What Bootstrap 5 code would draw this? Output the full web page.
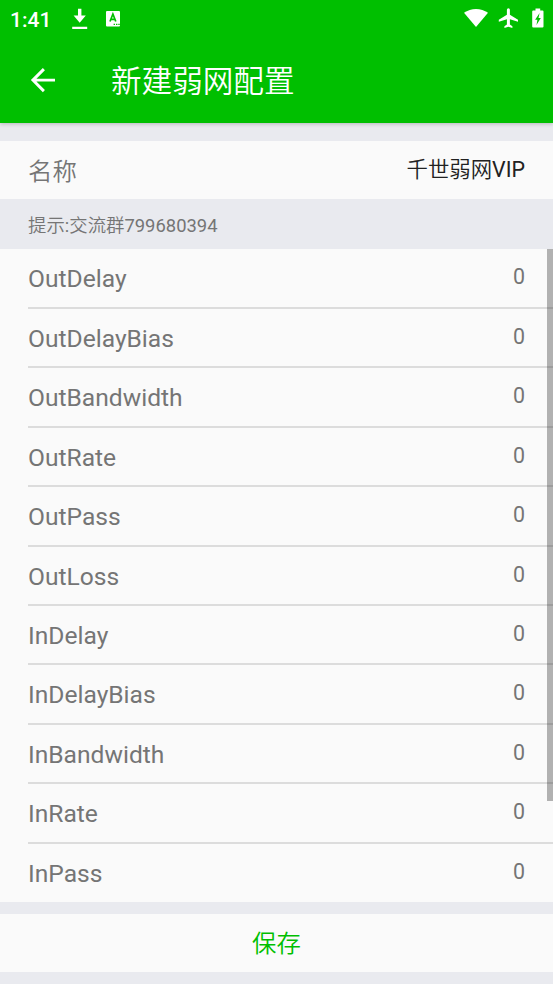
<!DOCTYPE html>
<html lang="zh-CN">
<head>
<meta charset="utf-8">
<meta name="viewport" content="width=device-width, initial-scale=1">
<title>新建弱网配置</title>
<link href="https://cdn.jsdelivr.net/npm/bootstrap@5.3.0/dist/css/bootstrap.min.css" rel="stylesheet">
<style>
body{font-family:Roboto,"Noto Sans CJK SC",sans-serif;background:#e9eaef;height:984px;overflow:hidden;color:#757575}
.app-head{background:#00bf00;height:123px;box-shadow:0 1px 4px rgba(0,0,0,.22);flex:none;color:#fff}
.status{height:38px;padding:0 8px 0 10px}
.clock{font-size:21px;font-weight:500;line-height:38px;padding-top:1px;width:59px}
.toolbar{height:85px;padding-left:25px}
.hanzi{font-family:"Noto Sans CJK SC DemiLight","Noto Sans CJK SC",sans-serif;font-weight:350}
.page-title{font-size:30.6px;line-height:84px;margin-left:49px;padding-bottom:3px}
.name-row{height:58px;margin-top:18px;background:#fafafa;padding:0 28px;flex:none}
.label-text{font-size:24.6px;line-height:60px}
.name-row .label-text{font-size:24.4px;line-height:58px}
.value-text{font-size:21.4px;line-height:56px}
.value-name{color:#212121;line-height:54px}
.hint{height:50px;font-size:18.4px;line-height:51px;padding-left:28px;flex:none}
.fields{height:653px;padding-top:.35px;background:#fafafa;overflow:hidden;flex:none}
.field{height:59.45px;margin-left:28px;padding-right:28px;border-bottom:2px solid #dcdcdc}
.field.last{border-bottom:0}
.thumb{right:0;top:0;width:6px;height:552px;background:rgba(0,0,0,.29)}
.save{height:58px;margin-top:12px;padding:0 0 3px;background:#fafafa;color:#00bf00;font-size:24.4px;line-height:55px;flex:none}
svg{display:block;flex:none}
</style>
<script src="https://cdn.jsdelivr.net/npm/bootstrap@5.3.0/dist/js/bootstrap.bundle.min.js"></script>
</head>
<body class="d-flex flex-column">
<header class="app-head">
  <div class="status d-flex align-items-center">
    <span class="clock">1:41</span>
    <svg width="22" height="38" viewBox="0 0 22 38" fill="#fff"><path d="M9 8.700h3.400v6.800h4.400L10.700 22.800 4.600 15.500H9zM3.200 26.700h15V29h-15z"/></svg>
    <svg width="36" height="38" viewBox="0 0 36 38"><rect x="15" y="11" width="14" height="15.500" rx="1" fill="#fff"/><path d="M19 21.500l2.900-7.500 2.900 7.500M20 19.300h3.800" fill="none" stroke="#00bf00" stroke-width="1.700"/><path d="M22.600 23.800h1.400v1.300h-1.400zM25 23.800h1.400v1.300H25zM27.300 23.800h1.400v1.300h-1.400z" fill="#00bf00"/></svg>
    <svg class="ms-auto" width="84" height="38" viewBox="0 0 84 38" fill="#fff"><path d="M3 12.800C10 7.600 20 7.600 27 12.800L15 27z"/><path d="M57 21.700v-2l-8.100-5V9.800a1.500 1.500 0 0 0-3 0v4.900l-8.100 5v2l8.100-2.400v5.100l-2.500 1.900V28l4-1.200 4 1.200v-1.700l-2.500-1.900v-5.100z"/><path d="M74.500 8.500h4.700v2h2.300q1 0 1 1V26.500q0 1-1 1H72.200q-1 0-1-1V11.500q0-1 1-1h2.300z"/><path d="M78.600 13l-4.500 6.700h2.300l-.9 5.300 4.300-7.100h-2.300z" fill="#00bf00"/></svg>
  </div>
  <div class="toolbar d-flex align-items-center">
    <svg width="37" height="84" viewBox="0 0 37 84" fill="none" stroke="#fff" stroke-width="2.900"><path d="M30 41.100H8M18.900 30.100L7.900 41.100l11 11"/></svg>
    <h1 class="page-title hanzi mb-0">新建弱网配置</h1>
  </div>
</header>
<section class="name-row d-flex justify-content-between">
  <span class="label-text hanzi">名称</span><span class="value-text value-name"><span class="hanzi">千世弱网</span>VIP</span>
</section>
<div class="hint"><span class="hanzi">提示</span>:<span class="hanzi">交流群</span>799680394</div>
<main class="fields position-relative">
  <div class="field d-flex justify-content-between"><span class="label-text">OutDelay</span><span class="value-text">0</span></div>
  <div class="field d-flex justify-content-between"><span class="label-text">OutDelayBias</span><span class="value-text">0</span></div>
  <div class="field d-flex justify-content-between"><span class="label-text">OutBandwidth</span><span class="value-text">0</span></div>
  <div class="field d-flex justify-content-between"><span class="label-text">OutRate</span><span class="value-text">0</span></div>
  <div class="field d-flex justify-content-between"><span class="label-text">OutPass</span><span class="value-text">0</span></div>
  <div class="field d-flex justify-content-between"><span class="label-text">OutLoss</span><span class="value-text">0</span></div>
  <div class="field d-flex justify-content-between"><span class="label-text">InDelay</span><span class="value-text">0</span></div>
  <div class="field d-flex justify-content-between"><span class="label-text">InDelayBias</span><span class="value-text">0</span></div>
  <div class="field d-flex justify-content-between"><span class="label-text">InBandwidth</span><span class="value-text">0</span></div>
  <div class="field d-flex justify-content-between"><span class="label-text">InRate</span><span class="value-text">0</span></div>
  <div class="field last d-flex justify-content-between"><span class="label-text">InPass</span><span class="value-text">0</span></div>
  <div class="thumb position-absolute"></div>
</main>
<button type="button" class="save hanzi btn rounded-0 border-0 w-100">保存</button>
</body>
</html>
